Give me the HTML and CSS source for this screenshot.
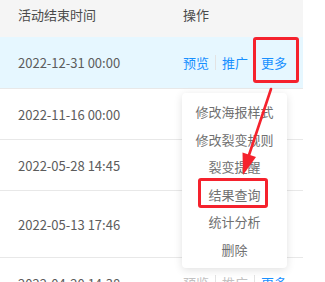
FILE: index.html
```html
<!DOCTYPE html>
<html lang="zh-CN">

<head>
  <meta charset="UTF-8">
  <meta name="viewport" content="width=device-width, initial-scale=1.0">
  <title>活动列表</title>
  <link rel="stylesheet" href="styles.css">
</head>

<body>
  <div class="table">
    <div class="row head">
      <div class="cell">活动结束时间</div>
      <div class="cell">操作</div>
    </div>
    <div class="row active">
      <div class="cell">2022-12-31 00:00</div>
      <div class="cell ops">
        <a>预览</a><span class="sep"></span><a>推广</a><span class="sep"></span><a>更多</a>
      </div>
    </div>
    <div class="row">
      <div class="cell">2022-11-16 00:00</div>
      <div class="cell ops"></div>
    </div>
    <div class="row">
      <div class="cell">2022-05-28 14:45</div>
      <div class="cell ops"></div>
    </div>
    <div class="row tall">
      <div class="cell">2022-05-13 17:46</div>
      <div class="cell ops"></div>
    </div>
    <div class="row">
      <div class="cell">2022-04-20 14:38</div>
      <div class="cell ops faded">
        <a>预览</a><span class="sep"></span><a>推广</a><span class="sep"></span><a class="more">更多</a>
      </div>
    </div>
  </div>

  <!-- 更多 の下拉菜单 -->
  <ul class="dropdown">
    <li>修改海报样式</li>
    <li>修改裂变规则</li>
    <li>裂变提醒</li>
    <li>结果查询</li>
    <li>统计分析</li>
    <li>删除</li>
  </ul>

  <!-- 标注 -->
  <div class="mark mark-more"></div>
  <div class="mark mark-result"></div>
  <svg class="arrow" width="325" height="282" viewBox="0 0 325 282">
    <line x1="271" y1="89" x2="248" y2="158" stroke="#f5222d" stroke-width="2.6" stroke-linecap="round" />
    <polygon points="243,175 242.5,152.5 256,157" fill="#f5222d" />
  </svg>
</body>

</html>
```

FILE: styles.css
```css
html,
body {
  margin: 0;
  background-color: #fff;
  overflow: hidden;
  height: 100%;
}

body {
  position: relative;
  font-family: "Noto Sans CJK SC", "Noto Sans", sans-serif;
  font-size: 13px;
  color: #5c5c5c;
}

.table {
  width: 303px;
}

.row {
  display: grid;
  grid-template-columns: 165px 1fr;
  align-items: center;
  height: 50px;
  border-bottom: 1px solid #e8e8e8;
}

.row .cell {
  padding-left: 18px;
}

.row.head {
  height: 37px;
  align-items: start;
  background-color: #f5f5f5;
  color: #4a4a4a;
  border-bottom: none;
}

.row.head .cell {
  padding-top: 5px;
}

.row.active {
  height: 51px;
  background-color: #e6f7ff;
}

.row.tall {
  height: 66px;
}

.ops {
  display: flex;
  align-items: center;
  margin-top: -1px;
}

.ops a {
  color: #1890ff;
}

.sep {
  display: inline-block;
  width: 1px;
  height: 15px;
  margin: 0 6px 0 6px;
  background-color: #e3e3e3;
}

.ops.faded a {
  color: #c2c2c2;
}

.ops.faded a.more {
  color: #1890ff;
}

.dropdown {
  position: absolute;
  left: 182px;
  top: 93px;
  width: 105px;
  margin: 0;
  padding: 5px 0 4px;
  list-style: none;
  background-color: #fff;
  border-radius: 4px;
  box-shadow: 0 2px 8px rgba(0, 0, 0, 0.12);
}

.dropdown li {
  line-height: 27.6px;
  text-align: center;
  color: #707070;
}

.mark {
  position: absolute;
  border: 3px solid #f5222d;
  border-radius: 3px;
}

.mark-more {
  left: 253px;
  top: 37px;
  width: 40px;
  height: 40px;
}

.mark-result {
  left: 198px;
  top: 178px;
  width: 64px;
  height: 24px;
}

.arrow {
  position: absolute;
  left: 0;
  top: 0;
}
```
